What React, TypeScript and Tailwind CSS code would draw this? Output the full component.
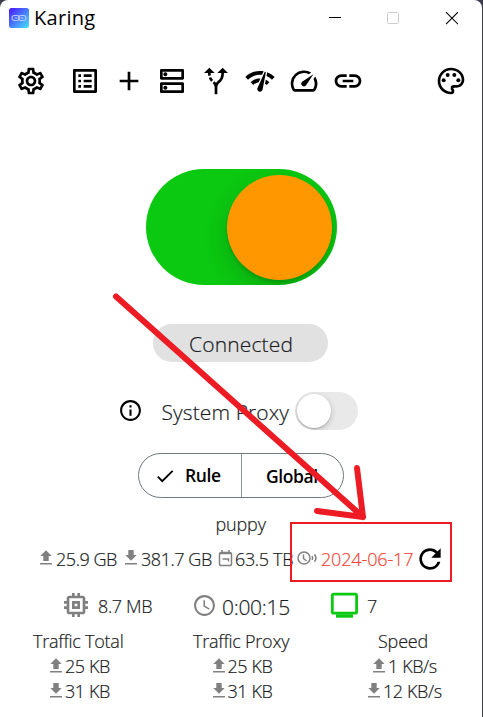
import type { ReactNode } from 'react';
import {
  MdOutlineSettings, MdOutlineListAlt, MdOutlineAdd, MdOutlineDns, MdOutlineAltRoute, MdOutlineNetworkCheck,
  MdOutlineSpeed, MdOutlineLink, MdOutlineColorLens, MdOutlineInfo, MdDone, MdRefresh, MdMemory, MdAccessTime,
} from 'react-icons/md';

function Arrow({ up }: { up?: boolean }) {
  return (
    <svg viewBox="0 0 18 18" className="h-[18px] w-[18px] shrink-0 fill-[#808080]">
      <path d={up ? 'M3 13h12v1.4H3zM6.3 11h5.4V6h3L9 .2 3.3 6h3z' : 'M3 13h12v1.4H3zM6.3 0h5.4v5h3L9 10.8 3.3 5h3z'} />
    </svg>
  );
}

function Stat({ title, up, down, className, rowUp, rowDown }: { title: ReactNode; up: string; down: string; className: string; rowUp: string; rowDown: string }) {
  return (
    <div className={`flex flex-col ${className}`}>
      <div className="h-[25px] leading-[25px]">{title}</div>
      <div className={`flex h-[25px] items-center ${rowUp}`}>
        <Arrow up />
        <span>{up}</span>
      </div>
      <div className={`flex h-[25px] items-center ${rowDown}`}>
        <Arrow />
        <span>{down}</span>
      </div>
    </div>
  );
}

export default function App() {
  return (
    <div className="relative h-[717px] w-[483px] overflow-hidden bg-[#3c3e4b] font-['Open_Sans','Noto_Sans',sans-serif] font-light text-[#1a1c1e] [-webkit-text-stroke:0.2px]">
      <main className="flex h-[717px] w-[482px] flex-col rounded-t-[8px] bg-white whitespace-nowrap">
        <header className="flex h-9 items-center pl-[9px]">
          <svg viewBox="0 0 20 20" className="h-5 w-5">
            <defs>
              <linearGradient id="logo" x1="0" y1="0" x2="1" y2="1">
                <stop offset="0" stopColor="#4b12ff" />
                <stop offset=".5" stopColor="#477bff" />
                <stop offset="1" stopColor="#45e5f5" />
              </linearGradient>
            </defs>
            <rect width="20" height="20" rx="2.5" fill="url(#logo)" />
            <g fill="none" stroke="#b9c5ff" strokeWidth="1.1">
              <rect x="3" y="7.5" width="7.4" height="5" rx="2.5" />
              <rect x="9.6" y="7.5" width="7.4" height="5" rx="2.5" />
              <path d="M5.5 10h3M11.5 10h3" />
            </g>
          </svg>
          <span className="ml-[5px] w-[64px] text-[20px] leading-[30px] font-normal tracking-[0.3px] text-black [-webkit-text-stroke:0]">Karing</span>
          <svg viewBox="0 0 130 20" className="ml-[230px] h-5 w-[130px]" fill="none">
            <path d="M1 9.5h12" stroke="#000" />
            <rect x="59.5" y="4.5" width="11" height="11" rx="1" stroke="#ccc" />
            <path d="M118 4.2l12 12M130 4.2l-12 12" stroke="#000" strokeWidth="1.1" />
          </svg>
        </header>

        <nav className="flex h-[90px] items-center gap-[11.85px] pl-[15.4px] text-[32px] text-black">
          <MdOutlineSettings className="mr-[9.5px]" />
          <MdOutlineListAlt />
          <MdOutlineAdd />
          <MdOutlineDns />
          <MdOutlineAltRoute />
          <MdOutlineNetworkCheck />
          <MdOutlineSpeed />
          <MdOutlineLink />
          <MdOutlineColorLens className="ml-[59.5px]" />
        </nav>

        <div className="mt-[43px] ml-[146px] flex h-[116px] w-[191px] justify-end overflow-hidden rounded-full bg-[#0bc811] p-[5.5px]">
          <div className="h-[105px] w-[105px] rounded-full bg-[#ff9800] shadow-[0_9px_24px_rgba(0,0,0,0.16),0_3px_3px_rgba(0,0,0,0.12)]" />
        </div>

        <div className="mt-[39px] ml-[153px] h-[38px] w-[175px] rounded-full bg-[#e1e1e1] pl-9 text-[21px] leading-[41px] tracking-[0.15px]">Connected</div>

        <div className="mt-[28px] flex h-[40px] items-center pl-[118px]">
          <MdOutlineInfo className="h-[25px] w-[25px] text-black" />
          <span className="mt-[4px] ml-[18.5px] w-[133.5px] text-[21px] leading-[40px] tracking-[0.1px]">System Proxy</span>
          <div className="mt-[2px] flex h-[38px] w-[63px] overflow-hidden rounded-full bg-[#e9e9e9] p-[2px]">
            <div className="h-[34px] w-[34px] rounded-full bg-white shadow-[0_2px_6px_rgba(0,0,0,0.2),0_1px_1px_rgba(0,0,0,0.15)]" />
          </div>
        </div>

        <div className="mt-[23px] ml-[138px] flex h-[45px] w-[206px] rounded-full border border-[#70797c] text-[17.5px] leading-[45px] font-semibold tracking-[-0.4px] text-black [-webkit-text-stroke:0]">
          <div className="flex w-[103px] items-center border-r border-[#8f9799] pl-[15px]">
            <MdDone className="h-[22px] w-[22px]" />
            <span className="ml-[9px]">Rule</span>
          </div>
          <span className="pl-[24px]">Global</span>
        </div>

        <div className="mt-[12px] ml-[215.5px] h-[28px] text-[18px] leading-[29px] tracking-[-0.15px]">puppy</div>

        <div className="mt-[6px] flex h-[30px] items-center pl-[37px] text-[18px] tracking-[-0.45px]">
          <Arrow up />
          <span className="ml-px w-[66px]">25.9 GB</span>
          <Arrow />
          <span className="ml-px w-[76px]">381.7 GB</span>
          <svg viewBox="0 0 18 18" className="h-[18px] w-[18px]" fill="none" stroke="#808080" strokeWidth="1.5">
            <rect x="2.5" y="2.5" width="12" height="13" rx="1.8" />
            <path d="M5 0v3M12 0v3M3 3.5h11M5.5 9h6v2.5" />
          </svg>
          <span className="w-[61px] tracking-[-0.35px]">63.5 TB</span>
          <svg viewBox="0 0 22 18" className="h-[18px] w-[22px]" fill="none" stroke="#808080" strokeWidth="1.5">
            <circle cx="8" cy="8" r="6" />
            <path d="M7.5 4.5v4l3 2.5M16 6.2q1.2 1.8 0 3.6M18.5 4.2q2.8 3.8 0 7.6" />
          </svg>
          <span className="ml-[3px] w-[93px] tracking-[-0.15px] text-[#f44336]">2024-06-17</span>
          <MdRefresh className="h-[32px] w-[32px] text-black" />
        </div>

        <div className="mt-[13px] flex h-[36px] items-center pl-[60px] text-[18px] tracking-[-0.35px]">
          <MdMemory className="h-[32px] w-[32px] text-[#808080]" />
          <span className="mt-[3px] ml-[6px] w-[93.5px]">8.7 MB</span>
          <MdAccessTime className="h-[25px] w-[25px] text-[#808080]" />
          <span className="mt-[5px] ml-[5.5px] w-[108px] text-[21px] tracking-[-0.3px]">0:00:15</span>
          <svg viewBox="0 0 28 26" className="h-[26px] w-[28px]" fill="none" stroke="#0bc811">
            <rect x="2.3" y="2.2" width="24.3" height="19" rx="1.5" strokeWidth="2.8" />
            <path d="M6 24h17" strokeWidth="3.4" />
          </svg>
          <span className="mt-[3px] ml-[9px]">7</span>
        </div>

        <div className="mt-[6px] flex text-[18px] tracking-[-0.4px]">
          <Stat title={<span className="tracking-[-0.25px]">Traffic Total</span>} up="25 KB" down="31 KB" className="w-[160px] pl-[33px]" rowUp="pl-[14px]" rowDown="pl-[14px]" />
          <Stat title={<span className="tracking-[-0.25px]">Traffic Proxy</span>} up="25 KB" down="31 KB" className="w-[185px] pl-[33px]" rowUp="pl-[16.5px]" rowDown="pl-[16.5px]" />
          <Stat title={<span className="pl-[14px] tracking-[-0.2px]">Speed</span>} up="1 KB/s" down="12 KB/s" className="pl-[19px]" rowUp="pl-[6px]" rowDown="pl-px" />
        </div>
      </main>

      <svg viewBox="0 0 483 717" className="absolute inset-0 h-[717px] w-[483px]" fill="none" stroke="#ed1c24">
        <path d="M116 296.5L363 517M317 511l46 6-6-49" strokeWidth="6" strokeLinecap="round" strokeLinejoin="round" />
        <rect x="291" y="523" width="160" height="58" strokeWidth="2" />
      </svg>
    </div>
  );
}
